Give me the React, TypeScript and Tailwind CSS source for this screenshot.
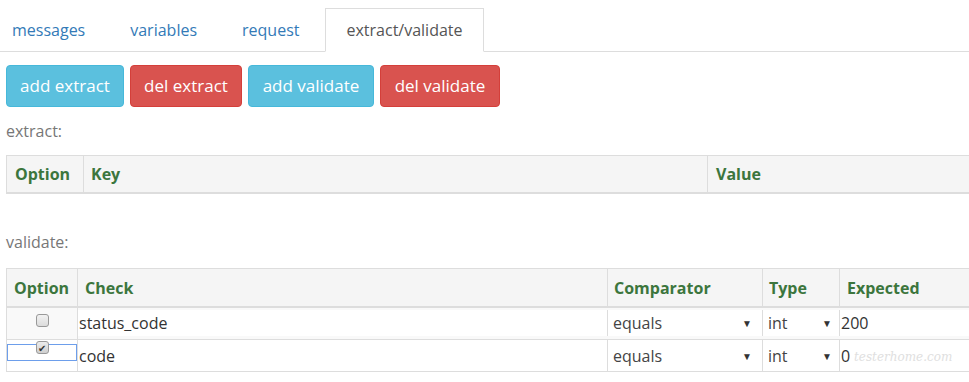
import React from "react";

const font = { fontFamily: '"Segoe UI", "Open Sans", "Noto Sans", sans-serif' };

function Caret() {
  return <span className="text-[10px] text-[#333] leading-none">▼</span>;
}

export default function App() {
  return (
    <div className="w-[969px] h-[382px] bg-white overflow-hidden relative text-[#333]" style={font}>
      {/* tabs */}
      <div className="flex items-end h-[52px] border-b border-[#ddd] pt-[8px]">
        <div className="h-[43px] flex items-center pl-[12px] pr-[45px] text-[16px] text-[#337ab7]">messages</div>
        <div className="h-[43px] flex items-center pr-[45px] text-[16px] text-[#337ab7]">variables</div>
        <div className="h-[43px] flex items-center pr-[26px] text-[16px] text-[#337ab7]">request</div>
        <div className="h-[44px] -mb-px flex items-center px-[20px] text-[16px] text-[#555] border border-[#ddd] border-b-white bg-white">
          extract/validate
        </div>
      </div>

      {/* buttons */}
      <div className="flex gap-[6px] px-[6px] mt-[13px]">
        <button className="h-[42px] w-[118px] rounded-[4px] bg-[#5bc0de] border border-[#46b8da] text-white text-[17px]">add extract</button>
        <button className="h-[42px] w-[112px] rounded-[4px] bg-[#d9534f] border border-[#d43f3a] text-white text-[17px]">del extract</button>
        <button className="h-[42px] w-[126px] rounded-[4px] bg-[#5bc0de] border border-[#46b8da] text-white text-[17px]">add validate</button>
        <button className="h-[42px] w-[120px] rounded-[4px] bg-[#d9534f] border border-[#d43f3a] text-white text-[17px]">del validate</button>
      </div>

      <div className="px-[6px] mt-[13px] text-[16px] text-[#777] h-[22px] leading-[22px]">extract:</div>

      {/* extract table */}
      <div className="ml-[6px] mt-[13px] border-t border-[#ddd] flex bg-[#f5f5f5] h-[39px] border-b-2 border-b-[#ddd] text-[#3c763d] font-bold text-[16px]">
        <div className="w-[78px] border-l border-r border-[#ddd] flex items-center pl-[8px]">Option</div>
        <div className="w-[624px] border-r border-[#ddd] flex items-center pl-[7px]">Key</div>
        <div className="flex-1 flex items-center pl-[8px]">Value</div>
      </div>

      <div className="px-[6px] mt-[37px] text-[16px] text-[#777] h-[22px] leading-[22px]">validate:</div>

      {/* validate table */}
      <div className="ml-[6px] mt-[15px] border-t border-l border-[#ddd]">
        <div className="flex bg-[#f5f5f5] h-[39px] border-b-2 border-[#ddd] text-[#3c763d] font-bold text-[16px]">
          <div className="w-[71px] border-r border-[#ddd] flex items-center pl-[7px]">Option</div>
          <div className="w-[530px] border-r border-[#ddd] flex items-center pl-[7px]">Check</div>
          <div className="w-[155px] border-r border-[#ddd] flex items-center pl-[6px]">Comparator</div>
          <div className="w-[77px] border-r border-[#ddd] flex items-center pl-[6px]">Type</div>
          <div className="flex-1 flex items-center pl-[7px]">Expected</div>
        </div>
        {/* row 1 */}
        <div className="flex h-[32px] border-b border-[#ddd] text-[16px] bg-[#f9f9f9]">
          <div className="w-[71px] border-r border-[#ddd] flex items-center justify-center">
            <span className="w-[13px] h-[13px] rounded-[3px] border border-[#999] bg-gradient-to-b from-[#f2f2f2] to-[#dcdcdc] -mt-[6px]" />
          </div>
          <div className="w-[530px] border-r border-[#ddd] flex items-center bg-white mt-[2px] mb-[3px] pl-[1px]">status_code</div>
          <div className="w-[155px] border-r border-[#ddd] flex items-center justify-between bg-white mt-[2px] mb-[3px] pl-[5px] pr-[10px] text-[#444]">
            <span>equals</span>
            <Caret />
          </div>
          <div className="w-[77px] border-r border-[#ddd] flex items-center justify-between bg-white mt-[2px] mb-[3px] pl-[5px] pr-[7px] text-[#444]">
            <span>int</span>
            <Caret />
          </div>
          <div className="flex-1 flex items-center bg-white mt-[2px] mb-[3px] pl-[1px]">200</div>
        </div>
        {/* row 2 */}
        <div className="flex h-[32px] border-b border-[#ddd] text-[16px] bg-white">
          <div className="w-[71px] border-r border-[#ddd] flex items-start">
            <div className="w-[70px] h-[17px] mt-[4px] border border-[#6d9eeb] flex items-start justify-center">
              <span className="w-[13px] h-[13px] rounded-[3px] border border-[#999] bg-gradient-to-b from-[#ececec] to-[#cfcfcf] flex items-center justify-center text-[10px] leading-none text-[#333] -mt-[4px]">✔</span>
            </div>
          </div>
          <div className="w-[530px] border-r border-[#ddd] flex items-center pl-[1px]">code</div>
          <div className="w-[155px] border-r border-[#ddd] flex items-center justify-between pl-[5px] pr-[10px] text-[#444]">
            <span>equals</span>
            <Caret />
          </div>
          <div className="w-[77px] border-r border-[#ddd] flex items-center justify-between pl-[5px] pr-[7px] text-[#444]">
            <span>int</span>
            <Caret />
          </div>
          <div className="flex-1 flex items-center pl-[1px]">0</div>
        </div>
      </div>

      <div className="absolute left-[854px] top-[351px] text-[12px] text-[#e0e0e0] italic pointer-events-none leading-none" style={{ fontFamily: '"DejaVu Serif", serif' }}>
        testerhome.com
      </div>
    </div>
  );
}
